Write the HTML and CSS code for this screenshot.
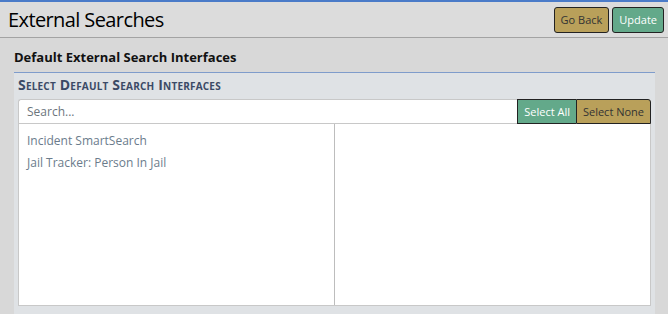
FILE: index.html
```html
<!DOCTYPE html>
<html>
<head>
    <title>External Searches</title>
    <link rel="stylesheet" href="styles.css">
</head>
<body>
    <div class="page-header">
        <h1>External Searches</h1>
        <div class="header-buttons">
            <button class="btn btn-back">Go Back</button>
            <button class="btn btn-update">Update</button>
        </div>
    </div>

    <div class="content">
        <h2 class="section-title">Default External Search Interfaces</h2>
        <div class="panel">
            <h3 class="panel-title">Select Default Search Interfaces</h3>
            <div class="search-bar">
                <input type="text" class="search-input" placeholder="Search...">
                <button class="btn btn-all">Select All</button>
                <button class="btn btn-none">Select None</button>
            </div>
            <div class="list-box">
                <div class="list-col">
                    <div class="list-item">Incident SmartSearch</div>
                    <div class="list-item">Jail Tracker: Person In Jail</div>
                </div>
                <div class="list-col"></div>
            </div>
        </div>
    </div>
</body>
</html>
```

FILE: styles.css
```css
body {
    margin: 0;
    padding: 0;
    background-color: #d8d8d8;
    font-family: "Open Sans", "Noto Sans", sans-serif;
    border-top: 2px solid #4a7bc8;
}
.page-header {
    display: flex;
    align-items: center;
    justify-content: space-between;
    height: 35px;
    padding: 0 4px 0 8px;
    background-color: #dcdcdc;
    border-bottom: 1px solid #a3a3a3;
}
.page-header h1 {
    margin: 0;
    font-size: 20px;
    font-weight: normal;
    color: #000;
    letter-spacing: -0.6px;
}
.header-buttons {
    display: flex;
    gap: 3px;
}
.btn {
    font-family: "Open Sans", "Noto Sans", sans-serif;
    font-size: 11px;
    border: 1px solid #222;
    border-radius: 3px;
    padding: 0 6px;
    height: 26px;
    cursor: pointer;
}
.btn-back,
.btn-none {
    background-color: #b9a05a;
    color: #333;
}
.btn-update,
.btn-all {
    background-color: #63a98a;
    color: #fff;
}
.content {
    padding: 0 13px 0 14px;
}
.section-title {
    margin: 0;
    padding: 10px 0 6px;
    font-size: 13px;
    font-weight: bold;
    color: #111;
    border-bottom: 1px solid #7f9ccb;
}
.panel {
    background-color: #dfe2e5;
    padding: 2px 4px 10px;
}
.panel-title {
    margin: 0 0 5px;
    font-size: 14px;
    font-weight: bold;
    font-variant: small-caps;
    letter-spacing: 0.2px;
    color: #3b4a66;
}
.search-bar {
    display: flex;
}
.search-input {
    flex: 1;
    height: 25px;
    box-sizing: border-box;
    border: 1px solid #c8c8c8;
    border-right: none;
    border-radius: 3px 0 0 0;
    padding: 0 8px;
    font-family: "Open Sans", "Noto Sans", sans-serif;
    font-size: 12px;
    color: #555;
}
.search-input::placeholder {
    color: #6c757d;
}
.search-bar .btn {
    height: 25px;
    padding: 0 6px;
}
.btn-all {
    border-radius: 0;
    border-right: none;
}
.btn-none {
    border-radius: 0 3px 0 0;
}
.list-box {
    display: flex;
    height: 181px;
    background-color: #fff;
    border: 1px solid #c8c8c8;
    border-top: none;
}
.list-col {
    flex: 1;
    padding: 6px 8px;
}
.list-col + .list-col {
    border-left: 1px solid #bdbdbd;
}
.list-item {
    font-size: 12px;
    color: #6b7c8c;
    line-height: 22px;
}
```
